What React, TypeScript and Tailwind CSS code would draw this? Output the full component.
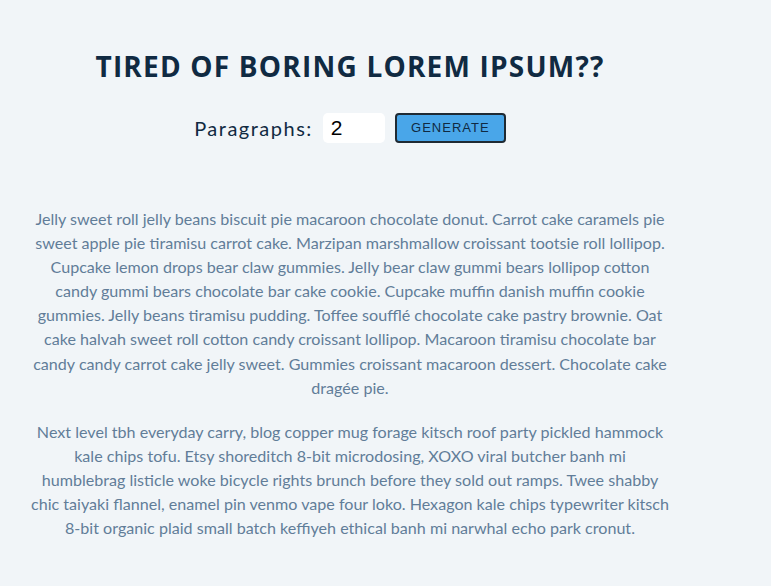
import React from "react";

const p1 = [
  "Jelly sweet roll jelly beans biscuit pie macaroon chocolate donut. Carrot cake caramels pie",
  "sweet apple pie tiramisu carrot cake. Marzipan marshmallow croissant tootsie roll lollipop.",
  "Cupcake lemon drops bear claw gummies. Jelly bear claw gummi bears lollipop cotton",
  "candy gummi bears chocolate bar cake cookie. Cupcake muffin danish muffin cookie",
  "gummies. Jelly beans tiramisu pudding. Toffee soufflé chocolate cake pastry brownie. Oat",
  "cake halvah sweet roll cotton candy croissant lollipop. Macaroon tiramisu chocolate bar",
  "candy candy carrot cake jelly sweet. Gummies croissant macaroon dessert. Chocolate cake",
  "dragée pie.",
];
const p2 = [
  "Next level tbh everyday carry, blog copper mug forage kitsch roof party pickled hammock",
  "kale chips tofu. Etsy shoreditch 8-bit microdosing, XOXO viral butcher banh mi",
  "humblebrag listicle woke bicycle rights brunch before they sold out ramps. Twee shabby",
  "chic taiyaki flannel, enamel pin venmo vape four loko. Hexagon kale chips typewriter kitsch",
  "8-bit organic plaid small batch keffiyeh ethical banh mi narwhal echo park cronut.",
];

export default function App() {
  return (
    <div className="min-h-[586px] w-full bg-[#f1f5f8]" style={{ fontFamily: "Lato, 'Open Sans', sans-serif" }}>
      <div className="ml-[30px] w-[640px] pt-[49px]">
        <h1
          className="text-center text-[28px] font-bold uppercase leading-[34px] tracking-[1.2px] text-[#102a42]"
          style={{ fontFamily: "'Open Sans', sans-serif" }}
        >
          Tired of boring lorem ipsum??
        </h1>
        <div className="mt-[30px] flex items-center justify-center">
          <label className="mr-[10px] text-[20px] tracking-[1.5px] text-[#102a42]">Paragraphs:</label>
          <div
            className="flex h-[30px] w-[62px] items-center rounded-[5px] bg-white pl-[8px] text-[21px] text-black"
            style={{ fontFamily: "'Liberation Sans', Arial, sans-serif" }}
          >
            2
          </div>
          <button
            className="ml-[10px] h-[30px] w-[111px] rounded-[4px] border-2 border-[#1f2a33] bg-[#49a6e9] text-[13px] tracking-[1px] text-[#102a42]"
            style={{ fontFamily: "'Liberation Sans', Arial, sans-serif" }}
          >
            GENERATE
          </button>
        </div>
        <div className="mt-[64px] text-center text-[16.1px] leading-[24.1px] text-[#617d98]">
          <p className="mb-[20px]">
            {p1.map((l, i) => (
              <React.Fragment key={i}>
                {l}
                {i < p1.length - 1 && <br />}
              </React.Fragment>
            ))}
          </p>
          <p>
            {p2.map((l, i) => (
              <React.Fragment key={i}>
                {l}
                {i < p2.length - 1 && <br />}
              </React.Fragment>
            ))}
          </p>
        </div>
      </div>
    </div>
  );
}
